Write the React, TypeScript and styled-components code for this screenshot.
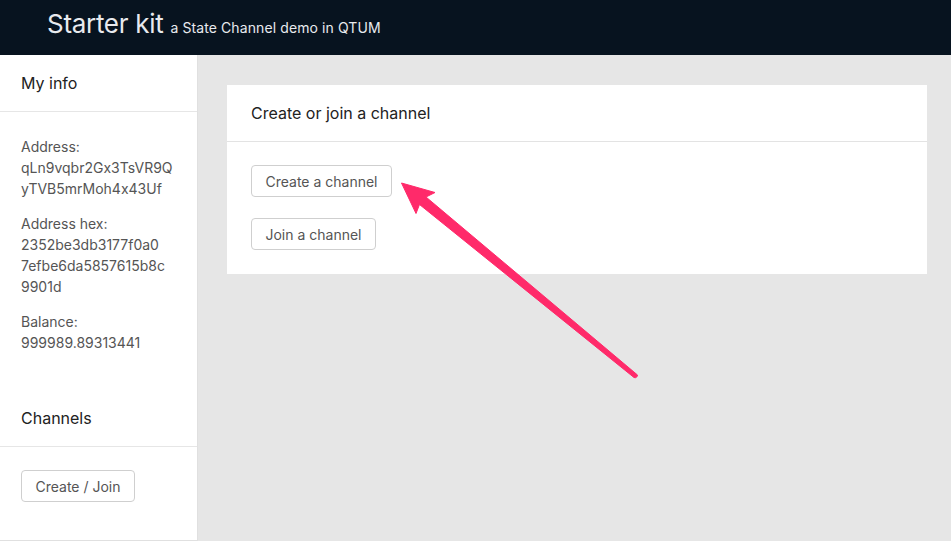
import React from "react";
import styled, { createGlobalStyle } from "styled-components";

const Global = createGlobalStyle`
  html, body { margin: 0; padding: 0; }
  body {
    font-family: Inter, "Noto Sans", "Liberation Sans", sans-serif;
    font-feature-settings: "calt" 0;
    background: #e6e6e6;
    -webkit-font-smoothing: antialiased;
  }
`;

const Page = styled.div`
  position: relative;
  width: 951px;
  height: 541px;
  display: flex;
  flex-direction: column;
  overflow: hidden;
`;

const Header = styled.header`
  height: 55px;
  flex: none;
  background: #07131f;
  display: flex;
  align-items: baseline;
  padding: 0 0 0 47px;
  color: #e8eaee;
`;

const Brand = styled.span`
  font-size: 26px;
  line-height: 47px;
  font-weight: 400;
  letter-spacing: -0.3px;
`;

const Tagline = styled.span`
  font-size: 14px;
  margin-left: 7px;
  letter-spacing: 0.1px;
`;

const Body = styled.div`
  flex: 1;
  display: flex;
  min-height: 0;
`;

const Sidebar = styled.aside`
  width: 197px;
  flex: none;
  background: #fff;
  border-right: 1px solid #e0e0e0;
  border-bottom: 1px solid #e0e0e0;
  box-sizing: content-box;
  height: 485px;
  display: flex;
  flex-direction: column;
`;

const SideHead = styled.div<{ $top?: number }>`
  height: 57px;
  box-sizing: border-box;
  padding: 0 21px;
  display: flex;
  align-items: center;
  border-bottom: 1px solid #e6e6e6;
  font-size: 16px;
  color: #222;
  margin-top: ${(p) => p.$top ?? 0}px;
`;

const SideBody = styled.div`
  padding: 24px 21px 0;
  display: flex;
  flex-direction: column;
  gap: 14px;
`;

const Field = styled.div`
  font-size: 14px;
  line-height: 21px;
  color: #555;
`;

const Button = styled.button<{ $w: number }>`
  width: ${(p) => p.$w}px;
  height: 32px;
  box-sizing: border-box;
  background: #fff;
  border: 1px solid #cfcfcf;
  border-radius: 4px;
  font-family: inherit;
  font-feature-settings: "calt" 0;
  font-size: 14px;
  color: #555;
  padding: 0;
  cursor: pointer;
`;

const SideButtons = styled.div`
  padding: 23px 21px 0;
`;

const Main = styled.main`
  flex: 1;
  padding: 30px 24px 0 29px;
`;

const Card = styled.section`
  width: 700px;
  background: #fff;
`;

const CardHead = styled.div`
  height: 57px;
  box-sizing: border-box;
  padding: 0 24px;
  display: flex;
  align-items: center;
  border-bottom: 1px solid #e3e3e3;
  font-size: 16px;
  color: #222;
`;

const CardBody = styled.div`
  padding: 23px 24px 24px;
  display: flex;
  flex-direction: column;
  align-items: flex-start;
  gap: 21px;
`;

const Arrow = styled.svg`
  position: absolute;
  left: 0;
  top: 0;
  pointer-events: none;
`;

const fields: { label: string; lines: string[] }[] = [
  { label: "Address:", lines: ["qLn9vqbr2Gx3TsVR9Q", "yTVB5mrMoh4x43Uf"] },
  {
    label: "Address hex:",
    lines: ["2352be3db3177f0a0", "7efbe6da5857615b8c", "9901d"],
  },
  { label: "Balance:", lines: ["999989.89313441"] },
];

export default function App() {
  return (
    <Page>
      <Global />
      <Header>
        <Brand>Starter kit</Brand>
        <Tagline>a State Channel demo in QTUM</Tagline>
      </Header>
      <Body>
        <Sidebar>
          <SideHead>My info</SideHead>
          <SideBody>
            {fields.map((f) => (
              <Field key={f.label}>
                {f.label}
                {f.lines.map((l) => (
                  <React.Fragment key={l}>
                    <br />
                    {l}
                  </React.Fragment>
                ))}
              </Field>
            ))}
          </SideBody>
          <SideHead $top={37}>Channels</SideHead>
          <SideButtons>
            <Button $w={114}>Create / Join</Button>
          </SideButtons>
        </Sidebar>
        <Main>
          <Card>
            <CardHead>Create or join a channel</CardHead>
            <CardBody>
              <Button $w={141}>Create a channel</Button>
              <Button $w={125}>Join a channel</Button>
            </CardBody>
          </Card>
        </Main>
      </Body>
      <Arrow width="951" height="541" viewBox="0 0 951 541">
        <path
          d="M401.5 183 L435 192.5 L426 197 L637.5 375 Q637 378.5 634 377.5 L419.5 204.5 L416 213.5 Z"
          fill="#ff2a6a"
          stroke="#ff2a6a"
          strokeWidth="1"
          strokeLinejoin="round"
        />
      </Arrow>
    </Page>
  );
}
